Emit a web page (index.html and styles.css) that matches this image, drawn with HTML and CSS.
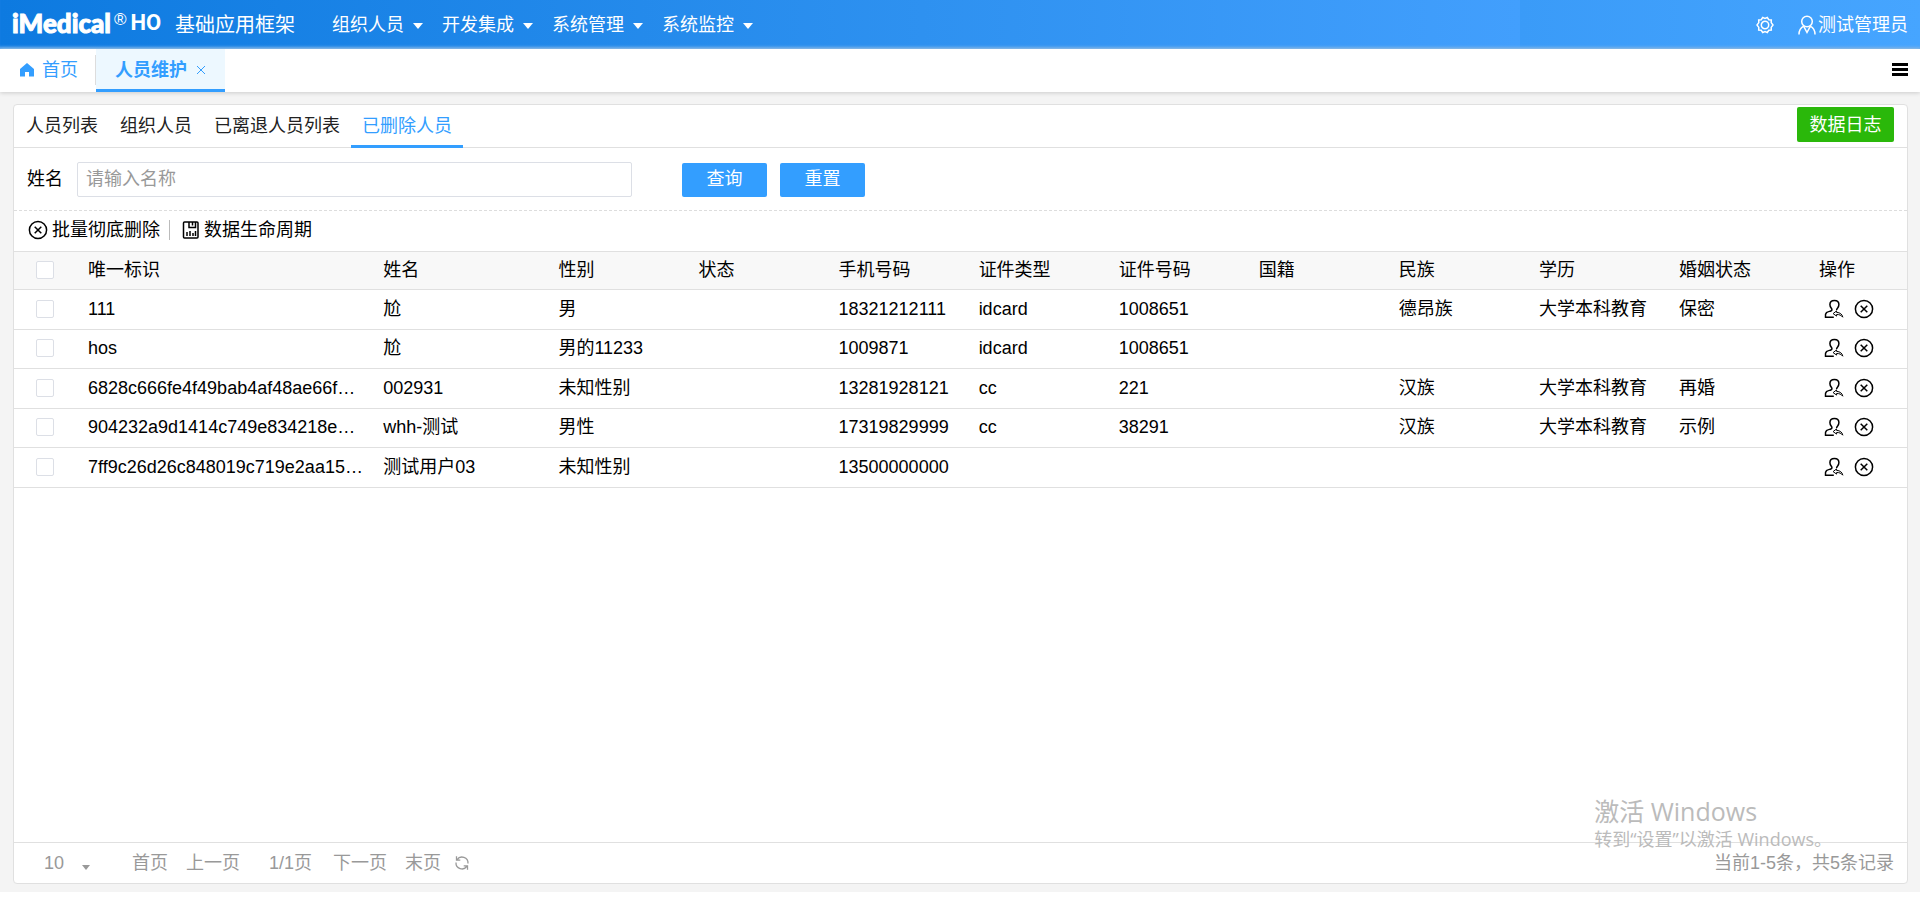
FILE: index.html
```html
<!DOCTYPE html>
<html lang="zh-CN">
<head>
<meta charset="utf-8">
<title>基础应用框架</title>
<link rel="stylesheet" href="styles.css">
</head>
<body>
<svg class="sprite" aria-hidden="true">
  <symbol id="i-close" viewBox="0 0 20 20"><circle cx="10" cy="10" r="8.600"/><path d="M6.700 6.700l6.600 6.600M13.300 6.700l-6.600 6.600"/></symbol>
  <symbol id="i-restore" viewBox="0 0 20 20"><path d="M12.600 11.200C12.500 10.300 13 9.700 13.600 9c.9-1.100 1.300-2.200 1.300-3.400C14.900 3 12.900 1.400 10.400 1.400S5.900 3 5.900 5.600c0 1.200.4 2.300 1.300 3.400 1.100 1.300 1 2.500-.4 3-1.500.5-3.200.7-4.300 1.600-1.100.9-1.300 2.500-1 4.600h8.300"/><path d="M12.600 11.900l-3.500 2.700 3.500 2.500v-1.600c2.600-.1 4.600.7 6.200 2.700-.5-2.900-2.700-4.700-6.200-4.800z" stroke-width="1"/></symbol>
  <symbol id="i-save" viewBox="0 0 18 20"><rect x="1.500" y="2" width="14.500" height="16" rx="1"/><path d="M7 2v5.500h6.500V2M10.500 2v3.500M5 16v-4M8 16v-5M11 16v-3M13.500 16v-5"/></symbol>
</svg>

<header class="topbar">
  <div class="brand"><span class="logo">iMedical</span><span class="reg">®</span><span class="ho">HO</span></div>
  <h1 class="title">基础应用框架</h1>
  <nav class="menu">
    <button type="button">组织人员<i class="caret"></i></button>
    <button type="button">开发集成<i class="caret"></i></button>
    <button type="button">系统管理<i class="caret"></i></button>
    <button type="button">系统监控<i class="caret"></i></button>
  </nav>
  <div class="account">
    <button type="button" class="gear" aria-label="设置"><svg viewBox="0 0 18 18"><path d="M6.700 1.500L9 2.500l2.300-1 1.500 2.200 2.500.3-.1 2.600L17 9l-1.800 2.400.1 2.600-2.500.3-1.500 2.200-2.300-1-2.300 1-1.500-2.200-2.500-.3.1-2.600L1 9l1.800-2.400L2.700 4l2.500-.3z"/><circle cx="9" cy="9" r="3.700"/></svg></button>
    <button type="button" class="user"><svg viewBox="0 0 18 20"><circle cx="9" cy="6.500" r="5.300"/><path d="M1 19.500c0-3.700 1.800-6.800 4.800-8.300M17 19.500c0-3.700-1.800-6.800-4.800-8.300M5.900 11.600L9 17.500l3.100-5.900"/></svg>测试管理员</button>
  </div>
</header>

<nav class="tabbar">
  <a class="tab" href="#"><svg class="home" viewBox="0 0 14 14"><path d="M7 0l7 6v7.500H9V9H5v4.500H0V6z"/></svg>首页</a>
  <span class="divider"></span>
  <a class="tab current" href="#">人员维护<svg class="x" viewBox="0 0 10 10"><path d="M1 1l8 8M9 1L1 9"/></svg></a>
  <button type="button" class="burger" aria-label="菜单"><i></i><i></i><i></i></button>
</nav>

<main class="page">
  <section class="panel">
    <div class="subtabs">
      <a href="#">人员列表</a><a href="#">组织人员</a><a href="#">已离退人员列表</a><a class="current" href="#">已删除人员</a>
      <button type="button" class="log">数据日志</button>
    </div>
    <form class="search">
      <label for="name">姓名</label>
      <input id="name" type="text" placeholder="请输入名称">
      <div class="actions"><button type="button">查询</button><button type="button">重置</button></div>
    </form>
    <div class="tools">
      <button type="button"><svg class="icon"><use href="#i-close"/></svg>批量彻底删除</button>
      <span class="sep"></span>
      <button type="button"><svg class="icon save"><use href="#i-save"/></svg>数据生命周期</button>
    </div>
    <table class="grid">
      <colgroup><col class="c-check"><col class="c-id"><col class="c-name"><col class="c"><col class="c"><col class="c"><col class="c"><col class="c"><col class="c"><col class="c"><col class="c"><col class="c"><col></colgroup>
      <thead><tr><th><input type="checkbox" aria-label="全选"></th><th>唯一标识</th><th>姓名</th><th>性别</th><th>状态</th><th>手机号码</th><th>证件类型</th><th>证件号码</th><th>国籍</th><th>民族</th><th>学历</th><th>婚姻状态</th><th>操作</th></tr></thead>
      <tbody>
        <tr><td><input type="checkbox" aria-label="选择"></td><td>111</td><td>尬</td><td>男</td><td></td><td>18321212111</td><td>idcard</td><td>1008651</td><td></td><td>德昂族</td><td>大学本科教育</td><td>保密</td><td class="ops"><button type="button" aria-label="恢复"><svg class="icon"><use href="#i-restore"/></svg></button><button type="button" aria-label="删除"><svg class="icon"><use href="#i-close"/></svg></button></td></tr>
        <tr><td><input type="checkbox" aria-label="选择"></td><td>hos</td><td>尬</td><td>男的11233</td><td></td><td>1009871</td><td>idcard</td><td>1008651</td><td></td><td></td><td></td><td></td><td class="ops"><button type="button" aria-label="恢复"><svg class="icon"><use href="#i-restore"/></svg></button><button type="button" aria-label="删除"><svg class="icon"><use href="#i-close"/></svg></button></td></tr>
        <tr><td><input type="checkbox" aria-label="选择"></td><td>6828c666fe4f49bab4af48ae66f…</td><td>002931</td><td>未知性别</td><td></td><td>13281928121</td><td>cc</td><td>221</td><td></td><td>汉族</td><td>大学本科教育</td><td>再婚</td><td class="ops"><button type="button" aria-label="恢复"><svg class="icon"><use href="#i-restore"/></svg></button><button type="button" aria-label="删除"><svg class="icon"><use href="#i-close"/></svg></button></td></tr>
        <tr><td><input type="checkbox" aria-label="选择"></td><td>904232a9d1414c749e834218e…</td><td>whh-测试</td><td>男性</td><td></td><td>17319829999</td><td>cc</td><td>38291</td><td></td><td>汉族</td><td>大学本科教育</td><td>示例</td><td class="ops"><button type="button" aria-label="恢复"><svg class="icon"><use href="#i-restore"/></svg></button><button type="button" aria-label="删除"><svg class="icon"><use href="#i-close"/></svg></button></td></tr>
        <tr><td><input type="checkbox" aria-label="选择"></td><td>7ff9c26d26c848019c719e2aa15…</td><td>测试用户03</td><td>未知性别</td><td></td><td>13500000000</td><td></td><td></td><td></td><td></td><td></td><td></td><td class="ops"><button type="button" aria-label="恢复"><svg class="icon"><use href="#i-restore"/></svg></button><button type="button" aria-label="删除"><svg class="icon"><use href="#i-close"/></svg></button></td></tr>
      </tbody>
    </table>
    <footer class="pager">
      <div class="size"><select aria-label="每页条数"><option>10</option></select><i class="caret"></i></div>
      <button type="button">首页</button>
      <button type="button">上一页</button>
      <span class="count">1/1页</span>
      <button type="button">下一页</button>
      <button type="button">末页</button>
      <button type="button" class="reload" aria-label="刷新"><svg viewBox="0 0 16 16"><path d="M3 4.800A6 6 0 0 1 14 8.500M13 11.200A6 6 0 0 1 2 7.500M2.500 1.300v3.800h3.800M13.500 14.700v-3.800H9.700"/></svg></button>
      <span class="total">当前1-5条，共5条记录</span>
    </footer>
  </section>
</main>
<aside class="watermark"><p class="big">激活 Windows</p><p>转到“设置”以激活 Windows。</p></aside>
</body>
</html>
```
FILE: styles.css
```css
* { box-sizing: border-box; }
body {
  margin: 0;
  min-height: 100vh;
  display: flex;
  flex-direction: column;
  background: #fff;
  color: #000;
  font: 18px/24px "Liberation Sans", "Noto Sans CJK SC", sans-serif;
}
button, input, select { font: inherit; color: inherit; }
button { border: 0; padding: 0; background: none; cursor: pointer; }
a { color: inherit; text-decoration: none; }
svg { fill: none; stroke: currentColor; }
.sprite { display: none; }
.icon { width: 20px; height: 20px; stroke-width: 1.500; flex: none; }

.topbar {
  display: flex;
  align-items: center;
  height: 49px;
  padding: 0 12px;
  color: #fff;
  background: linear-gradient(90deg, #0d7ae0 0, #2e91f0 48%, #429ffd 79.170%, #3a9bf8 79.170%, #46a5ff 100%);
  box-shadow: inset 0 -4px 3px -2px #6aaeee;
}
.brand { display: flex; align-items: center; width: 163px; padding-bottom: 4px; }
.logo { font: 900 26px/26px Lato, sans-serif; -webkit-text-stroke: 1px currentColor; }
.reg { font-size: 17px; line-height: 17px; margin: 0 4px 6px 3px; }
.ho { font: 700 22px/26px Roboto, sans-serif; }
.title { margin: 0; width: 157px; font-size: 20px; font-weight: 400; }
.menu { display: flex; gap: 19px; }
.menu button { display: flex; align-items: center; gap: 9px; }
.menu .caret { margin-top: 2px; }
.caret { border: 5px solid transparent; border-top: 6px solid currentColor; border-bottom: 0; }
.account { display: flex; align-items: center; margin-left: auto; gap: 24px; }
.account button { display: flex; align-items: center; gap: 2px; }
.account svg { width: 18px; height: 20px; stroke-width: 1.500; }

.tabbar {
  display: flex;
  height: 43px;
  position: relative;
  color: #339eff;
  background: #fff;
  box-shadow: 0 1px 4px #ccc;
}
.tab { display: flex; align-items: center; gap: 8px; padding: 0 17px 2px 20px; }
.divider { width: 1px; height: 30px; margin-top: 6px; background: #ddd; }
.home { width: 14px; height: 14px; fill: currentColor; stroke: none; }
.tab.current { gap: 9px; padding: 0 19px 2px; font-weight: 700; background: #edf8ff; box-shadow: inset 0 -3px #339eff; }
.x { width: 10px; height: 10px; }
.burger { display: grid; align-content: center; gap: 2px; margin: 0 12px 2px auto; }
.burger i { width: 16px; height: 3px; background: #000; }

.page { flex: 1; display: flex; margin-bottom: 5px; padding: 12px 12px 8px 13px; background: #f4f4f4; }
.panel { flex: 1; display: flex; flex-direction: column; min-width: 0; border: 1px solid #e0e0e0; border-radius: 4px; background: #fff; }
.subtabs { display: flex; height: 43px; padding-left: 1px; color: #222; border-bottom: 1px solid #e0e0e0; }
.subtabs a { padding: 9px 11px 0; height: 43px; }
.subtabs .current { color: #339eff; border-bottom: 3px solid #339eff; }
.log { width: 97px; height: 35px; margin: 2px 13px 0 auto; color: #fff; background: #2ab80a; border-radius: 2px; }
.search { display: flex; align-items: center; height: 63px; padding: 0 13px; border-bottom: 1px dashed #ddd; }
.search label { width: 50px; }
.search input { width: 555px; height: 35px; padding: 0 8px; border: 1px solid #dcdfe6; border-radius: 2px; }
.search input::placeholder { color: #999; }
.actions { display: flex; gap: 13px; margin-left: 50px; padding-top: 1px; }
.actions button { width: 85px; height: 34px; padding-bottom: 2px; color: #fff; background: #339eff; border-radius: 2px; }
.tools { display: flex; align-items: center; height: 40px; padding: 0 14px 2px; }
.tools button { display: flex; align-items: center; gap: 4px; }
.sep { width: 1px; height: 20px; margin: 0 12px 0 9px; background: #bbb; }
.save { width: 18px; }

.grid { width: 100%; table-layout: fixed; border-collapse: collapse; }
.c-check { width: 64px; }
.c-id { width: 15.600%; }
.c-name { width: 9.250%; }
.c { width: 7.400%; }
.grid th, .grid td { height: 40px; padding: 0 8px 2px 10px; text-align: left; font-weight: 400; line-height: 24px; white-space: nowrap; border-bottom: 1px solid #e0e0e0; }
.grid th { height: 38px; background: #f8f8f8; border-top: 1px solid #e0e0e0; }
.grid tr:nth-child(even) td { height: 39px; }
.grid input { appearance: none; display: block; width: 18px; height: 18px; margin: 0 0 0 12px; border: 1px solid #dcdfe6; border-radius: 2px; background: #fff; }
.grid td.ops { padding: 0 0 4px 9px; }
.grid .ops button { margin: 0 4px 0 6px; vertical-align: middle; }
.ops .icon { display: block; }

.pager { display: flex; align-items: center; height: 41px; margin-top: auto; padding: 0 13px 0 30px; color: #999; border-top: 1px solid #e0e0e0; }
.size { display: flex; align-items: center; width: 88px; }
.size select { appearance: none; width: 38px; padding: 0; border: 0; background: none; }
.size .caret { border-width: 5px 4px 0; margin-top: 8px; }
.pager button { margin-right: 18px; }
.count { margin: 0 21px 0 11px; }
.pager .reload { margin: 0 0 0 -5px; }
.reload svg { display: block; width: 16px; height: 16px; stroke-width: 1.300; }
.total { margin-left: auto; }

.watermark { position: absolute; right: 88px; bottom: 46px; color: #bbb; font-family: "Open Sans", "Noto Sans CJK SC", sans-serif; pointer-events: none; }
.watermark p { margin: 0; }
.watermark .big { font-size: 25px; line-height: 32px; }
```
